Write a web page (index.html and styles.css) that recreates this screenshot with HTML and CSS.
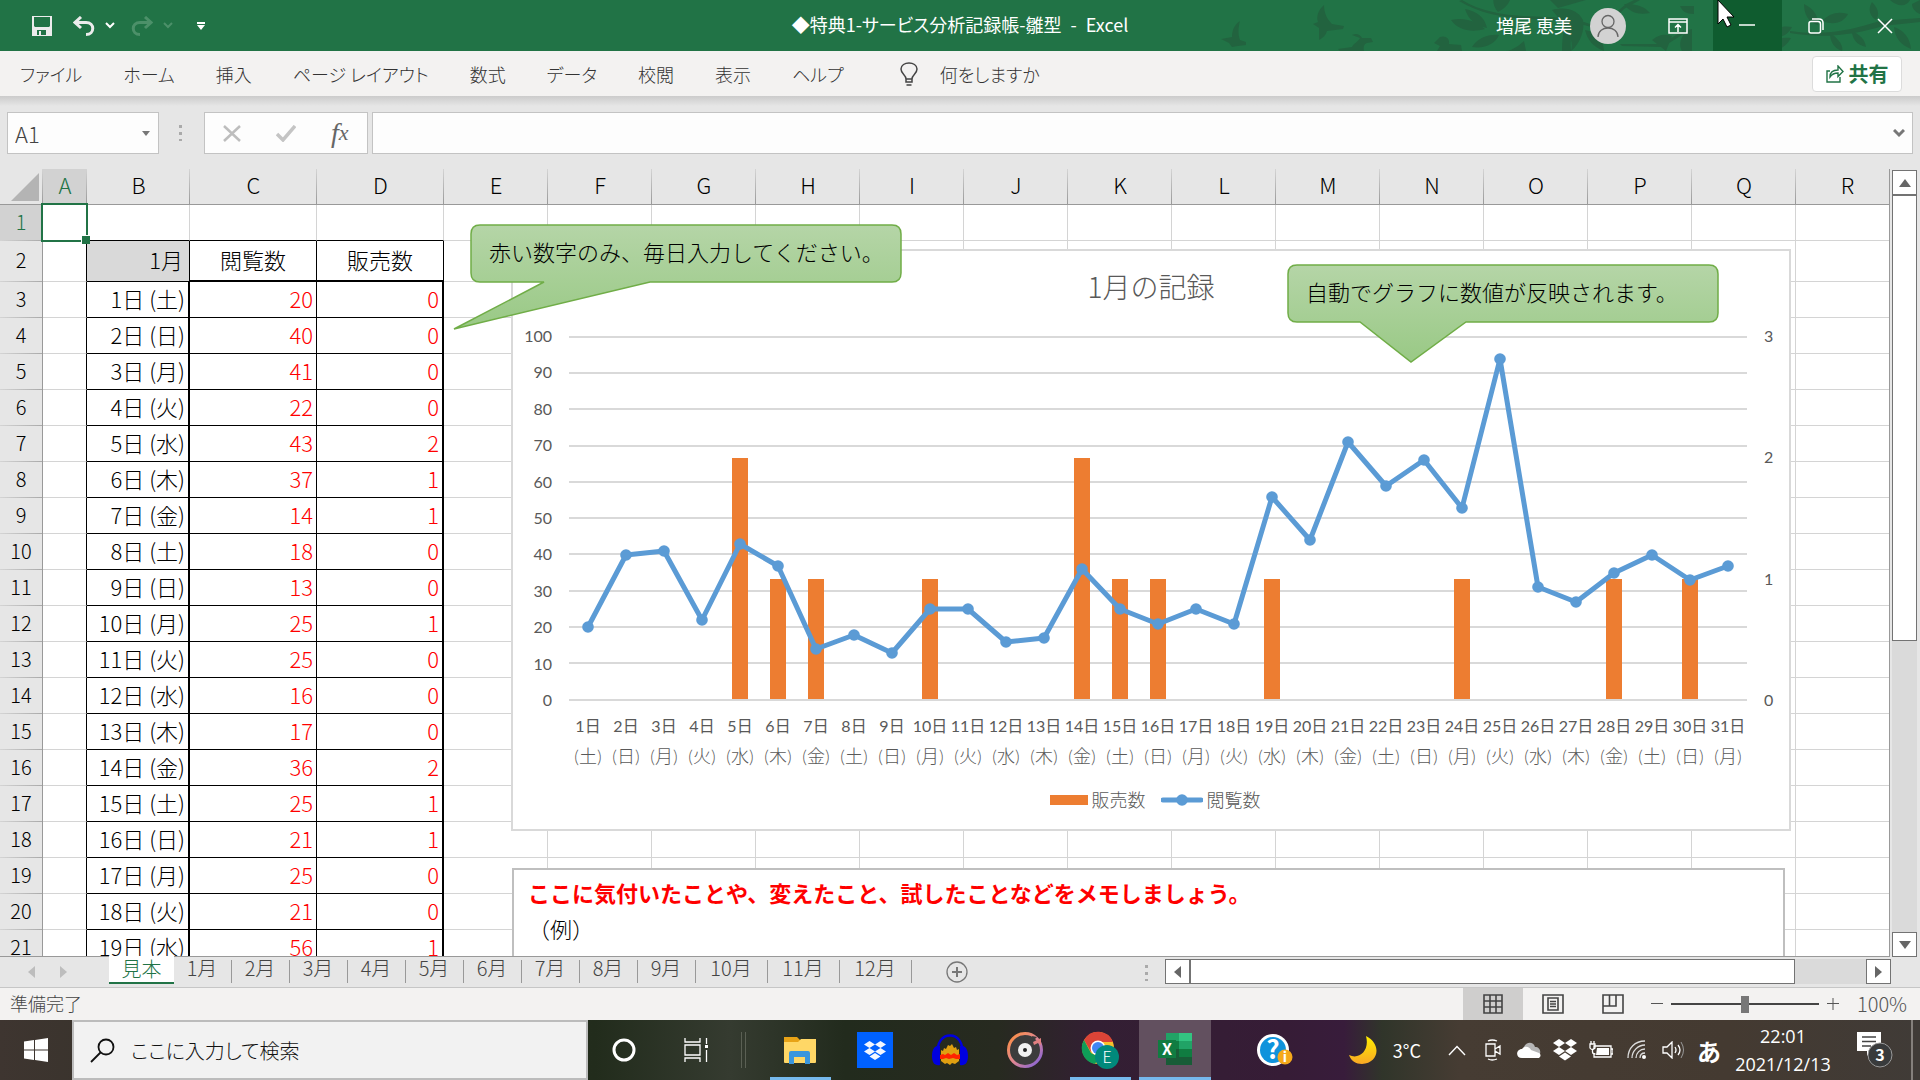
FILE: index.html
```html
<!DOCTYPE html>
<html lang="ja">
<head>
<meta charset="utf-8">
<title>◆特典1-サービス分析記録帳-雛型 - Excel</title>
<link rel="stylesheet" href="styles.css">
</head>
<body>
<header class="titlebar">
  <svg class="titlebar-art" width="720" height="51" viewBox="0 0 720 51" aria-hidden="true">
    <g fill="#22633f">
      <path d="M40 21c-6 4-8 10-8 16l-11 2 8 4 3 4 6-1 8-1v-3l-6-2c-2-5-2-12 0-19z"/>
      <path d="M124 5c-6 5-8 12-6 17l-5 2 6 4 0 12c4-2 7-5 8-9l16-2 1-3-12-2c-5-5-8-11-8-19z"/>
      <path d="M152 35l8 3c-1 3-6 5-8 9l-14 2 2 2h24c-1-4 0-7 3-8l6-1-2-4h-9c-2-4-6-5-10-3z"/>
      <path d="M240 37c5-2 10 1 9 7l12 1 1 6h-25l3-5-6-3z"/>
      <path d="M251 20c12-3 24 0 34 9-14 4-27 1-34-9zM265 9c12 2 20 9 22 19-11-2-19-9-22-19zM272 47c6-9 16-13 27-12-4 9-14 14-27 12zM298 12c-5-6-6-12-3-18h16c0 8-5 14-13 18zM318 46c-5 3-9 5-12 5h20l-2-10z"/>
      <path d="M262 0c30 18 64 16 110 18l24 8-1 2-26-7c-44-2-78-1-110-20zM350 0l8 8 28-8zM362 51c0-14 2-25 6-31l6 3c-3 8-4 17-3 28zM352 10c14-4 26 0 31 10 2 10-3 24-12 31 3-10-2-22-19-41zM400 26l26-22 8-4h6l-16 9-20 20zM424 4c14 0 21 3 26 9-11 2-20 0-26-9zM385 30c12 2 18 8 19 21-11-4-17-12-19-21zM420 44l42 0 22-14 1 3-22 14-41-1zM452 40c8-6 12-6 20-4l-6 15zM480 6h14v8c-8 0-12-3-14-8zM488 30c-7 6-10 14-6 21h10V29z"/>
      <path d="M591 38c-7 12-18 15-27 13 2-8 11-15 27-13zM570 36c3-7 11-11 22-9-4 8-11 12-22 9zM604 4c10 5 14 11 14 21-10-3-14-11-14-21zM622 21c8-8 16-10 26-7-4 8-13 12-26 7zM590 31c40 6 70-4 90-10l40-3v4l-37 4c-26 8-56 13-93 7zM630 33c8 5 14 13 12 18-8-3-12-9-12-18zM652 31c8 4 13 8 14 16-9-2-14-8-14-16zM672 2c6 6 8 12 4 18-7-5-8-11-4-18zM690 0h20c-3 6-11 8-20 0zM694 27c9 3 16 10 17 22-10-4-16-11-17-22zM712 4l8-4v14c-5-2-8-6-8-10z"/>
    </g>
  </svg>
  <div class="quick-access">
    <button class="icon-btn save" aria-label="上書き保存"><svg width="20" height="20" viewBox="0 0 20 20"><path d="M0 0h20v20H0z" fill="#ececec"/><path d="M2 1h16v9l-1 1H3l-1-1z" fill="#217346"/><path d="M5 14h9v5H9v-4H7v4H5z" fill="#217346"/></svg></button>
    <button class="icon-btn undo" aria-label="元に戻す"><svg width="22" height="20" viewBox="0 0 22 20"><path d="M8 1L2 6.500l6 5.500M2 6.500h11c9 0 9 12 0 12" fill="none" stroke="#ececec" stroke-width="3"/></svg></button>
    <button class="icon-btn" aria-label="元に戻す履歴"><svg width="10" height="7" viewBox="0 0 10 7"><path d="M1 1l4 4 4-4" fill="none" stroke="#fff" stroke-width="2"/></svg></button>
    <button class="icon-btn redo" aria-label="やり直し"><svg width="22" height="20" viewBox="0 0 22 20"><path d="M14 1l6 5.500-6 5.500M20 6.500H9c-9 0-9 12 0 12" fill="none" stroke="#4c9069" stroke-width="3"/></svg></button>
    <button class="icon-btn" aria-label="やり直し履歴"><svg width="10" height="7" viewBox="0 0 10 7"><path d="M1 1l4 4 4-4" fill="none" stroke="#4c9069" stroke-width="2"/></svg></button>
    <button class="icon-btn customize" aria-label="クイック アクセスのカスタマイズ"><svg width="8" height="8" viewBox="0 0 8 8"><path d="M0 0h8v2H0zM0 3h8L4 8z" fill="#fff"/></svg></button>
  </div>
  <h1 class="doc-title">◆特典1-サービス分析記録帳-雛型&ensp;-&ensp;Excel</h1>
  <div class="window-tools">
    <span class="user-name">増尾 恵美</span>
    <svg class="avatar" width="36" height="36" viewBox="0 0 36 36"><circle cx="18" cy="18" r="18" fill="#d2d2d2"/><g fill="none" stroke="#666" stroke-width="1.300"><circle cx="18" cy="13.500" r="6"/><path d="M8 29c0-12 20-12 20 0"/></g></svg>
    <button class="win-btn" aria-label="リボンの表示オプション"><svg width="20" height="16" viewBox="0 0 20 16"><path d="M1 1h18v14H1zM1 4h18M10 14V7M7 9.500l3-3 3 3" fill="none" stroke="#fff" stroke-width="1.500"/></svg></button>
    <button class="win-btn hovered" aria-label="最小化"><svg width="16" height="16" viewBox="0 0 16 16"><path d="M0 7h16" stroke="#fff" stroke-width="1.500"/></svg></button>
    <button class="win-btn" aria-label="元に戻す (縮小)"><svg width="16" height="16" viewBox="0 0 16 16"><path d="M3 3.500h7q2.500 0 2.500 2.500v7q0 2-2 2H3q-2 0-2-2V5.500q0-2 2-2zM4 1h7q4 0 4 4v7" fill="none" stroke="#fff" stroke-width="1.500"/></svg></button>
    <button class="win-btn" aria-label="閉じる"><svg width="16" height="16" viewBox="0 0 16 16"><path d="M1 1l14 14M15 1L1 15" stroke="#fff" stroke-width="1.500"/></svg></button>
  </div>
  <svg class="cursor" width="20" height="28" viewBox="0 0 20 28" aria-hidden="true"><path d="M1 0v24l5-5 4 8 4-2-4-8h7z" fill="#fff" stroke="#000" stroke-width="1"/></svg>
</header>

<nav class="ribbon">
  <button>ファイル</button><button>ホーム</button><button>挿入</button><button>ページ レイアウト</button><button>数式</button><button>データ</button><button>校閲</button><button>表示</button><button>ヘルプ</button>
  <button class="tell-me"><svg width="18" height="24" viewBox="0 0 18 24"><path d="M6 17c0-4-5-5-5-10 0-8 16-8 16 0 0 5-5 6-5 10zM6 17v3h6v-3M6.500 23h5" fill="none" stroke="#444" stroke-width="1.500"/></svg>何をしますか</button>
  <button class="share"><svg width="18" height="18" viewBox="0 0 18 18"><path d="M4 6H1v11h13v-5M4 12c0-5 3-7 8-7V1l5 5.500-5 5V8c-4 0-6 1-8 4z" fill="none" stroke="#217346" stroke-width="1.400"/></svg>共有</button>
</nav>

<section class="formula-bar">
  <div class="name-box"><input aria-label="名前ボックス" value="A1"><svg width="8" height="5" viewBox="0 0 8 5"><path d="M0 0h8L4 5z" fill="#777"/></svg></div>
  <div class="grip"></div>
  <div class="formula-tools">
    <button aria-label="キャンセル"><svg width="18" height="17" viewBox="0 0 18 17"><path d="M1 1l16 15M17 1L1 16" stroke="#bdbdbd" stroke-width="2.500"/></svg></button>
    <button aria-label="入力"><svg width="20" height="17" viewBox="0 0 20 17"><path d="M1 9l6 6L19 1" fill="none" stroke="#c4c4c4" stroke-width="3.500"/></svg></button>
    <button class="fx" aria-label="関数の挿入"><i>f</i><i class="x">x</i></button>
  </div>
  <div class="formula-input"><input aria-label="数式バー" value=""><svg width="12" height="9" viewBox="0 0 12 9"><path d="M1 1l5 5 5-5" fill="none" stroke="#777" stroke-width="3"/></svg></div>
</section>

<main class="workspace">
  <div class="sheet">
    <table class="grid">
      <colgroup><col class="c-head"><col class="c-a"><col class="c-b"><col class="c-cd"><col class="c-cd"><col class="c-std"><col class="c-std"><col class="c-std"><col class="c-std"><col class="c-std"><col class="c-std"><col class="c-std"><col class="c-std"><col class="c-std"><col class="c-std"><col class="c-std"><col class="c-std"><col class="c-std"><col></colgroup>
      <thead><tr><td class="corner"><svg width="28" height="28" viewBox="0 0 28 28"><path d="M28 0v28H0z" fill="#b4b4b4"/></svg></td><th class="selected">A</th><th>B</th><th>C</th><th>D</th><th>E</th><th>F</th><th>G</th><th>H</th><th>I</th><th>J</th><th>K</th><th>L</th><th>M</th><th>N</th><th>O</th><th>P</th><th>Q</th><th>R</th></tr></thead>
      <tbody>
        <tr class="first"><th class="selected">1</th><td class="active"><span class="cell-cursor"></span></td><td></td><td></td><td></td><td class="blank" colspan="14"></td></tr>
        <tr class="labels"><th>2</th><td></td><td class="month">1月</td><td>閲覧数</td><td>販売数</td><td class="blank" colspan="14"></td></tr>
        <tr><th>3</th><td></td><td>1日 (土)</td><td>20</td><td>0</td><td class="blank" colspan="14"></td></tr>
        <tr><th>4</th><td></td><td>2日 (日)</td><td>40</td><td>0</td><td class="blank" colspan="14"></td></tr>
        <tr><th>5</th><td></td><td>3日 (月)</td><td>41</td><td>0</td><td class="blank" colspan="14"></td></tr>
        <tr><th>6</th><td></td><td>4日 (火)</td><td>22</td><td>0</td><td class="blank" colspan="14"></td></tr>
        <tr><th>7</th><td></td><td>5日 (水)</td><td>43</td><td>2</td><td class="blank" colspan="14"></td></tr>
        <tr><th>8</th><td></td><td>6日 (木)</td><td>37</td><td>1</td><td class="blank" colspan="14"></td></tr>
        <tr><th>9</th><td></td><td>7日 (金)</td><td>14</td><td>1</td><td class="blank" colspan="14"></td></tr>
        <tr><th>10</th><td></td><td>8日 (土)</td><td>18</td><td>0</td><td class="blank" colspan="14"></td></tr>
        <tr><th>11</th><td></td><td>9日 (日)</td><td>13</td><td>0</td><td class="blank" colspan="14"></td></tr>
        <tr><th>12</th><td></td><td>10日 (月)</td><td>25</td><td>1</td><td class="blank" colspan="14"></td></tr>
        <tr><th>13</th><td></td><td>11日 (火)</td><td>25</td><td>0</td><td class="blank" colspan="14"></td></tr>
        <tr><th>14</th><td></td><td>12日 (水)</td><td>16</td><td>0</td><td class="blank" colspan="14"></td></tr>
        <tr><th>15</th><td></td><td>13日 (木)</td><td>17</td><td>0</td><td class="blank" colspan="14"></td></tr>
        <tr><th>16</th><td></td><td>14日 (金)</td><td>36</td><td>2</td><td class="blank" colspan="14"></td></tr>
        <tr><th>17</th><td></td><td>15日 (土)</td><td>25</td><td>1</td><td class="blank" colspan="14"></td></tr>
        <tr><th>18</th><td></td><td>16日 (日)</td><td>21</td><td>1</td><td class="blank" colspan="14"></td></tr>
        <tr><th>19</th><td></td><td>17日 (月)</td><td>25</td><td>0</td><td class="blank" colspan="14"></td></tr>
        <tr><th>20</th><td></td><td>18日 (火)</td><td>21</td><td>0</td><td class="blank" colspan="14"></td></tr>
        <tr><th>21</th><td></td><td>19日 (水)</td><td>56</td><td>1</td><td class="blank" colspan="14"></td></tr>
      </tbody>
    </table>

    <figure class="chart">
      <figcaption>1月の記録</figcaption>
      <div class="plot-row">
        <div class="axis left"><span>100</span><span>90</span><span>80</span><span>70</span><span>60</span><span>50</span><span>40</span><span>30</span><span>20</span><span>10</span><span>0</span></div>
        <svg class="plot" width="1178" height="366" viewBox="0 -1 1178 366">
          <defs><marker id="dot" markerUnits="userSpaceOnUse" markerWidth="12" markerHeight="12" refX="6" refY="6"><circle cx="6" cy="6" r="5.800" fill="#5b9bd5"/></marker></defs>
          <path d="M0 0h1178M0 36h1178M0 72h1178M0 109h1178M0 145h1178M0 181h1178M0 217h1178M0 254h1178M0 290h1178M0 326h1178M0 363h1178" stroke="#d9d9d9" stroke-width="2"/>
          <path d="M163 121h16v241h-16zM201 242h16v120h-16zM239 242h16v120h-16zM353 242h16v120h-16zM505 121h16v241h-16zM543 242h16v120h-16zM581 242h16v120h-16zM695 242h16v120h-16zM885 242h16v120h-16zM1037 242h16v120h-16zM1113 242h16v120h-16z" fill="#ed7d31"/>
          <polyline points="19,290 57,218 95,214 133,283 171,207 209,229 247,312 285,298 323,316 361,272 399,272 437,305 475,301 513,232 551,272 589,287 627,272 665,287 703,160 741,203 779,105 817,149 855,123 893,171 931,22 969,250 1007,265 1045,236 1083,218 1121,243 1159,229" fill="none" stroke="#5b9bd5" stroke-width="5" stroke-linejoin="round" marker-start="url(#dot)" marker-mid="url(#dot)" marker-end="url(#dot)"/>
        </svg>
        <div class="axis right"><span>3</span><span>2</span><span>1</span><span>0</span></div>
      </div>
      <div class="days">
        <span>1日<b>(土)</b></span><span>2日<b>(日)</b></span><span>3日<b>(月)</b></span><span>4日<b>(火)</b></span><span>5日<b>(水)</b></span><span>6日<b>(木)</b></span><span>7日<b>(金)</b></span><span>8日<b>(土)</b></span><span>9日<b>(日)</b></span><span>10日<b>(月)</b></span><span>11日<b>(火)</b></span><span>12日<b>(水)</b></span><span>13日<b>(木)</b></span><span>14日<b>(金)</b></span><span>15日<b>(土)</b></span><span>16日<b>(日)</b></span><span>17日<b>(月)</b></span><span>18日<b>(火)</b></span><span>19日<b>(水)</b></span><span>20日<b>(木)</b></span><span>21日<b>(金)</b></span><span>22日<b>(土)</b></span><span>23日<b>(日)</b></span><span>24日<b>(月)</b></span><span>25日<b>(火)</b></span><span>26日<b>(水)</b></span><span>27日<b>(木)</b></span><span>28日<b>(金)</b></span><span>29日<b>(土)</b></span><span>30日<b>(日)</b></span><span>31日<b>(月)</b></span>
      </div>
      <div class="legend">
        <svg width="38" height="12" viewBox="0 0 38 12"><path d="M0 1h38v10H0z" fill="#ed7d31"/></svg><span>販売数</span>
        <svg class="line-key" width="42" height="12" viewBox="0 0 42 12"><path d="M2 6h38" stroke="#5b9bd5" stroke-width="5" stroke-linecap="round"/><circle cx="21" cy="6" r="5.800" fill="#5b9bd5"/></svg><span>閲覧数</span>
      </div>
    </figure>

    <svg class="callout input-hint" width="452" height="108" viewBox="0 0 452 108">
      <defs><linearGradient id="leaf" x1="0" y1="0" x2="0" y2="1"><stop offset="0" stop-color="#b5d5a7"/><stop offset="1" stop-color="#99c985"/></linearGradient></defs>
      <path d="M28 2h412q9 0 9 9v39q0 9-9 9H198L2 106 92 59H28q-9 0-9-9V11q0-9 9-9z" fill="url(#leaf)" stroke="#70ad47" stroke-width="1.500"/>
      <text x="37" y="38">赤い数字のみ、毎日入力してください。</text>
    </svg>
    <svg class="callout graph-hint" width="434" height="101" viewBox="0 0 434 101">
      <path d="M11 2h412q9 0 9 9v39q0 9-9 9H180L125 99 74 59H11q-9 0-9-9V11q0-9 9-9z" fill="url(#leaf)" stroke="#70ad47" stroke-width="1.500"/>
      <text x="20" y="38">自動でグラフに数値が反映されます。</text>
    </svg>
    <div class="memo"><p class="memo-title">ここに気付いたことや、変えたこと、試したことなどをメモしましょう。</p><p>（例）</p></div>
  </div>
  <div class="scroll vertical">
    <button aria-label="上へ"><svg width="12" height="8" viewBox="0 0 12 8"><path d="M0 8h12L6 0z" fill="#666"/></svg></button>
    <div class="track"><div class="thumb"></div></div>
    <button aria-label="下へ"><svg width="12" height="8" viewBox="0 0 12 8"><path d="M0 0h12L6 8z" fill="#666"/></svg></button>
  </div>
</main>

<div class="sheet-tabs">
  <div class="tab-nav">
    <button aria-label="前のシート"><svg width="7" height="12" viewBox="0 0 7 12"><path d="M7 0v12L0 6z" fill="#bdbdbd"/></svg></button>
    <button aria-label="次のシート"><svg width="7" height="12" viewBox="0 0 7 12"><path d="M0 0v12l7-6z" fill="#bdbdbd"/></svg></button>
  </div>
  <button class="tab current">見本</button><button class="tab">1月</button><button class="tab">2月</button><button class="tab">3月</button><button class="tab">4月</button><button class="tab">5月</button><button class="tab">6月</button><button class="tab">7月</button><button class="tab">8月</button><button class="tab">9月</button><button class="tab wide">10月</button><button class="tab wide">11月</button><button class="tab wide">12月</button>
  <button class="add-tab" aria-label="新しいシート"><svg width="22" height="22" viewBox="0 0 22 22"><g fill="none" stroke="#777"><circle cx="11" cy="11" r="10" stroke-width="1.300"/><path d="M6 11h10M11 6v10" stroke-width="2"/></g></svg></button>
  <div class="grip"></div>
  <div class="scroll horizontal">
    <button aria-label="左へ"><svg width="7" height="12" viewBox="0 0 7 12"><path d="M7 0v12L0 6z" fill="#666"/></svg></button>
    <div class="track"><div class="thumb"></div></div>
    <button aria-label="右へ"><svg width="7" height="12" viewBox="0 0 7 12"><path d="M0 0v12l7-6z" fill="#666"/></svg></button>
  </div>
</div>

<footer class="status">
  <span class="ready">準備完了</span>
  <button class="view on" aria-label="標準"><svg width="20" height="20" viewBox="0 0 20 20"><path d="M1 1h18v18H1zM7 1v18M13 1v18M1 7h18M1 13h18" fill="none" stroke="#444" stroke-width="1.600"/></svg></button>
  <button class="view" aria-label="ページ レイアウト"><svg width="22" height="20" viewBox="0 0 22 20"><path d="M1 1h20v18H1zM6 4h10v12H6zM8 7.500h6M8 10h6M8 12.500h6" fill="none" stroke="#444" stroke-width="1.600"/></svg></button>
  <button class="view" aria-label="改ページ プレビュー"><svg width="22" height="20" viewBox="0 0 22 20"><path d="M1 1h20v18H1zM1 12h13V1M7.500 1v11" fill="none" stroke="#444" stroke-width="1.600"/></svg></button>
  <button class="zoom-step" aria-label="縮小"><svg width="12" height="12" viewBox="0 0 12 12"><path d="M0 5.500h12" stroke="#555"/></svg></button>
  <input class="zoom" type="range" min="0" max="100" value="50" aria-label="ズーム">
  <button class="zoom-step" aria-label="拡大"><svg width="12" height="12" viewBox="0 0 12 12"><path d="M0 5.500h12M6 0v12" stroke="#555"/></svg></button>
  <span class="zoom-value">100%</span>
</footer>

<div class="taskbar">
  <button class="app" aria-label="スタート"><svg width="24" height="24" viewBox="0 0 24 24"><path d="M0 3.500L10 2v9.500H0zM11 1.900L24 0v11.500H11zM0 12.500h10V22L0 20.500zM11 12.500h13V24l-13-1.900z" fill="#fff"/></svg></button>
  <label class="search"><svg width="25" height="25" viewBox="0 0 25 25"><g fill="none" stroke="#111" stroke-width="1.800"><circle cx="16" cy="9" r="7.500"/><path d="M10.500 14.500L1 24"/></g></svg><input type="text" placeholder="ここに入力して検索"></label>
  <button class="app" aria-label="Cortana"><svg width="24" height="24" viewBox="0 0 24 24"><circle cx="12" cy="12" r="10" fill="none" stroke="#fff" stroke-width="3"/></svg></button>
  <button class="app" aria-label="タスク ビュー"><svg width="26" height="24" viewBox="0 0 26 24"><path d="M2 0v4h15V0M2 24v-4h15v4M2 7h15v10H2zM23.500 0v6M23.500 12v12" fill="none" stroke="#fff" stroke-width="1.300"/><path d="M22 7h3v3h-3z" fill="#fff"/></svg></button>
  <div class="divider"></div>
  <div class="apps">
    <button class="app running" aria-label="エクスプローラー"><svg width="32" height="28" viewBox="0 0 32 28"><path d="M0 1h13l3 3v8H0z" fill="#e8a317"/><path d="M0 6h14l3-3h15v23q0 1-1 1H1q-1 0-1-1z" fill="#ffd766"/><path d="M5 28V17q0-2 2-2h17q2 0 2 2v11h-5v-7H10v7z" fill="#3a96dd"/></svg></button>
    <button class="app" aria-label="Dropbox"><svg width="36" height="36" viewBox="0 0 36 36"><path d="M0 0h36v36H0z" fill="#0061ff"/><path d="M12.500 9l5.500 3.500-5.500 3.500L7 12.500zM23.500 9l5.500 3.500-5.500 3.500-5.500-3.500zM12.500 16l5.500 3.500-5.500 3.500L7 19.500zM23.500 16l5.500 3.500-5.500 3.500-5.500-3.500zM18 21l5.500 3.500L18 28l-5.500-3.500z" fill="#f4f7ff"/></svg></button>
    <button class="app" aria-label="Audacity"><svg width="36" height="32" viewBox="0 0 36 32"><path d="M9 16l2 1 1-3 2 1 2-4 2 1 2-2 2 4 2-1 1 3 2-1v12l-4 3-3-1-2 2-3-2-2 1-4-3z" fill="#e0a010"/><path d="M8 21l3-1 2 1 3-2 3 2 3-2 3 2 3-1v5l-4 0-3-1-4 1-3-1-3 1-3-0z" fill="#ff2200"/><path d="M6 21C2-5 34-5 30 21" fill="none" stroke="#0000e0" stroke-width="2.500"/><path d="M8 12C3 11 0 15 0 22s3 10 8 9zM28 12c5-1 8 3 8 10s-3 10-8 9z" fill="#0000e0"/></svg></button>
    <button class="app" aria-label="Groove"><svg width="36" height="36" viewBox="0 0 36 36"><defs><linearGradient id="ring" x1="0" y1="0" x2="1" y2="1"><stop offset="0" stop-color="#ff8f3c"/><stop offset=".5" stop-color="#e08792"/><stop offset="1" stop-color="#7b5fe0"/></linearGradient></defs><circle cx="18" cy="18" r="16.500" fill="#3c3c3c" stroke="url(#ring)" stroke-width="3"/><circle cx="18" cy="18" r="7" fill="#f0f0f0"/><circle cx="18" cy="18" r="2" fill="#222"/><path d="M26 10l8-4v7l-3-2-4 2z" fill="#e08080"/><path d="M25 4l5 1-4 4z" fill="#3c3c3c"/></svg></button>
    <button class="app running" aria-label="Chrome"><svg width="38" height="38" viewBox="0 0 38 38"><circle cx="17" cy="17" r="16" fill="#f8c02c"/><path d="M3 9a16 16 0 0 1 29 2H17l-7 10z" fill="#db4437"/><path d="M3 9l7 13 8 4-4 7A16 16 0 0 1 3 9z" fill="#0f9d58"/><circle cx="17" cy="17" r="7.500" fill="#fff"/><circle cx="17" cy="17" r="6" fill="#4285f4"/><circle cx="26" cy="26" r="12" fill="#00897b"/><text x="26" y="32" text-anchor="middle" font-size="16" fill="#fff">E</text></svg></button>
    <button class="app running focused" aria-label="Excel"><svg width="36" height="34" viewBox="0 0 36 34"><path d="M9 0h13v8H9z" fill="#21a366"/><path d="M22 0h13v8H22z" fill="#33c481"/><path d="M9 8h13v8H9z" fill="#107c41"/><path d="M22 8h13v8H22z" fill="#21a366"/><path d="M9 16h26v16H9z" fill="#185c37"/><path d="M22 16h13v8H22z" fill="#107c41"/><path d="M1 7h18v18H1z" fill="#107c41"/><text x="10" y="22" text-anchor="middle" font-size="16" font-weight="700" fill="#fff">X</text></svg></button>
  </div>
  <button class="app help" aria-label="ヘルプ"><svg width="36" height="34" viewBox="0 0 36 34"><circle cx="16" cy="17" r="16" fill="#fff"/><circle cx="16" cy="17" r="13" fill="#0f93dc"/><text x="16" y="26" text-anchor="middle" font-size="26" font-weight="700" fill="#fff">?</text><circle cx="28" cy="24" r="7.500" fill="#f5a91b"/><text x="28" y="29" text-anchor="middle" font-size="14" font-weight="700" fill="#fff">i</text></svg></button>
  <div class="tray">
    <button class="weather"><svg width="28" height="28" viewBox="0 0 28 28"><defs><linearGradient id="moon" x1="0" y1="0" x2="0" y2="1"><stop offset="0" stop-color="#ffee00"/><stop offset="1" stop-color="#f9a825"/></linearGradient></defs><path d="M17 0c16 8 13 27-4 28C7 28 2 25 0 19c10 5 21-4 17-19z" fill="url(#moon)"/></svg>3°C</button>
    <button class="tray-icon" aria-label="隠れているインジケーター"><svg width="18" height="11" viewBox="0 0 18 11"><path d="M1 10l8-8.500 8 8.500" fill="none" stroke="#fff" stroke-width="1.400"/></svg></button>
    <button class="tray-icon" aria-label="会議"><svg width="18" height="22" viewBox="0 0 18 22"><path d="M2 5h9v12H2zM11 10l5-3v8l-5-3M4 2q4-2 9 0M4 20q4 2 9 0" fill="none" stroke="#fff" stroke-width="1.300"/></svg></button>
    <button class="tray-icon" aria-label="OneDrive"><svg width="24" height="16" viewBox="0 0 24 16"><path d="M6 9C6 0 16-2 18 5c4 0 6 3 5 7L8 14z" fill="#b5b5b5"/><path d="M5 16c-7 0-6-9 0-9 3-4 8-2 9 1l8 3c3 2 1 5-1 5z" fill="#fff"/></svg></button>
    <button class="tray-icon" aria-label="Dropbox"><svg width="24" height="22" viewBox="0 0 24 22"><path d="M6 0l6 4-6 4-6-4zM18 0l6 4-6 4-6-4zM6 8l6 4-6 4-6-4zM18 8l6 4-6 4-6-4zM12 13.500l6 4-6 4-6-4z" fill="#fff"/></svg></button>
    <button class="tray-icon" aria-label="バッテリー"><svg width="24" height="18" viewBox="0 0 24 18"><path d="M5 8V5h17v11H5v-4M22 8h2v5h-2" fill="none" stroke="#fff" stroke-width="1.300"/><path d="M8 7h12v7H7z" fill="#fff"/><path d="M1 3v4q2 3 5 0V3zM2 0v3M5 0v3M3.500 8v3q0 2 3 2" fill="none" stroke="#fff" stroke-width="1.300"/></svg></button>
    <button class="tray-icon" aria-label="ネットワーク"><svg width="20" height="20" viewBox="0 0 20 20"><g fill="none" stroke="#ddd" stroke-width="1.300"><path d="M1 18C1 8 8 1 18 1M5 18C5 11 11 5 18 5M9 18c0-5 4-9 9-9M13 18c0-3 2-5 5-5"/></g><circle cx="17" cy="17" r="2" fill="#fff"/></svg></button>
    <button class="tray-icon" aria-label="音量"><svg width="22" height="18" viewBox="0 0 22 18"><path d="M1 6h4l5-5v16l-5-5H1zM13 6q2 3 0 6M16 4q4 5 0 10" fill="none" stroke="#fff" stroke-width="1.300"/><path d="M19 1q5 8 0 16" fill="none" stroke="#999"/></svg></button>
    <button class="tray-icon ime">あ</button>
    <button class="clock"><span>22:01</span><span>2021/12/13</span></button>
    <button class="notice" aria-label="通知 3件"><svg width="36" height="36" viewBox="0 0 36 36"><path d="M0 0h24v19H14l-4 5v-5H0z" fill="#fff"/><path d="M5 5h14M5 9.500h14M5 14h9" stroke="#444" stroke-width="1.400"/><circle cx="23" cy="23" r="12" fill="#393b3c" stroke="#999"/><text x="23" y="29" text-anchor="middle" font-size="16" font-weight="700" fill="#fff">3</text></svg></button>
    <button class="show-desktop" aria-label="デスクトップの表示"></button>
  </div>
</div>
</body>
</html>
```
FILE: styles.css
```css
* { box-sizing: border-box; }

body {
  margin: 0;
  height: 100vh;
  display: flex;
  flex-direction: column;
  overflow: hidden;
  background: #e6e6e6;
  color: #000;
  font-family: "Noto Sans CJK JP", "Noto Sans", sans-serif;
  font-size: 20px;
  font-weight: 300;
  font-feature-settings: "palt";
}

button, input {
  margin: 0;
  padding: 0;
  border: 0;
  background: none;
  color: inherit;
  font: inherit;
  font-feature-settings: inherit;
  white-space: nowrap;
}

button { display: flex; align-items: center; justify-content: center; }
svg { display: block; flex: none; }
p, figure { margin: 0; }

/* Title bar */
.titlebar {
  position: relative;
  flex: none;
  display: grid;
  grid-template-columns: 1fr auto 1fr;
  align-items: center;
  height: 51px;
  background: #217346;
  color: #fff;
  font-size: 18px;
}
.titlebar-art { position: absolute; top: 0; right: 0; }
.quick-access { display: flex; align-items: center; gap: 10px; padding-left: 32px; }
.save { margin-right: 11px; }
.redo { margin-left: 6px; }
.customize { margin-left: 14px; }
.doc-title { margin: 0; padding-bottom: 4px; font-size: 18px; font-weight: 400; }
.window-tools { position: relative; display: flex; align-items: center; justify-content: flex-end; }
.user-name { margin-right: 18px; padding-bottom: 2px; font-weight: 400; }
.avatar { margin-right: 18px; }
.win-btn { width: 69px; height: 51px; padding-right: 2px; }
.win-btn.hovered { background: #0f5c2f; }
.cursor { position: absolute; top: 0; right: 183px; }

/* Ribbon tabs */
.ribbon {
  flex: none;
  display: flex;
  align-items: center;
  gap: 41px;
  height: 45px;
  padding: 0 18px 0 20px;
  background: #f3f2f1;
  color: #333;
  font-size: 18px;
}
.tell-me { gap: 22px; margin-left: 15px; }
.share {
  gap: 5px;
  width: 90px;
  height: 36px;
  margin-left: auto;
  border: 1px solid #dcdcdc;
  border-radius: 4px;
  background: #fff;
  color: #217346;
  font-size: 20px;
  font-weight: 700;
}

/* Formula bar */
.formula-bar {
  flex: none;
  display: flex;
  height: 73px;
  padding: 16px 7px 15px;
  background: linear-gradient(#cbcbcb, #e6e6e6 10px);
}
.name-box, .formula-tools, .formula-input {
  display: flex;
  align-items: center;
  border: 1px solid #c3c3c3;
  background: #fdfdfd;
}
.name-box { width: 152px; padding: 0 8px 0 7px; color: #444; font-size: 22px; }
.name-box input, .formula-input input { flex: 1; width: 0; height: 38px; outline: 0; }
.grip {
  width: 3px;
  height: 16px;
  background: repeating-linear-gradient(#aaa 0 3px, transparent 3px 7px);
}
.formula-bar .grip { margin: 13px 22px 0 20px; }
.formula-tools { width: 164px; padding-left: 18px; gap: 35px; }
.fx { color: #666; font-family: "Liberation Serif", serif; font-size: 28px; line-height: 28px; }
.fx .x { font-size: 22px; }
.formula-input { flex: 1; margin-left: 4px; padding-right: 7px; }

/* Worksheet */
.workspace { flex: 1; min-height: 0; display: flex; }
.sheet {
  position: relative;
  flex: 1;
  overflow: hidden;
  border-right: 1px solid #999;
  border-bottom: 1px solid #999;
  background: #fff;
}
.grid {
  width: 100%;
  table-layout: fixed;
  border-collapse: separate;
  border-spacing: 0;
  font-size: 22px;
  line-height: 30px;
}
.c-head { width: 43px; }
.c-a { width: 44px; }
.c-b { width: 103px; }
.c-cd { width: 127px; }
.c-std { width: 104px; }
.grid th, .grid td { height: 36px; padding: 0 0 4px; font-weight: 300; white-space: nowrap; }
.grid thead th {
  padding-bottom: 5px;
  border-bottom: 1px solid #999;
  background: linear-gradient(#d4d4d4, #999) right / 1px 100% no-repeat #e6e6e6;
}
.grid thead th:last-child { padding-left: 10px; background: #e6e6e6; }
.grid tbody th {
  padding-bottom: 3px;
  border-right: 1px solid #999;
  background: linear-gradient(90deg, #d4d4d4, #aaa) bottom / 100% 1px no-repeat #e6e6e6;
  font-size: 20px;
}
.grid thead .selected, .grid tbody .selected { background-color: #d2d2d2; color: #217346; }
.grid .corner { padding: 0 4px 0 11px; border-bottom: 1px solid #999; background: linear-gradient(#d4d4d4, #999) right / 1px 100% no-repeat #e6e6e6; }
.grid tbody td { border-right: 1px solid #d4d4d4; border-bottom: 1px solid #d4d4d4; }
.grid tbody td:nth-child(2) { border-right-color: #000; }
.grid tbody td:nth-child(n+3) { border-right: 1px solid #000; border-bottom-color: #000; text-align: right; }
.grid tbody td:nth-child(3) { border-right-width: 2px; padding-right: 3px; }
.grid tbody td:nth-child(4), .grid tbody td:nth-child(5) { padding-right: 3px; color: #f00; }
.grid tbody td:nth-child(5) { border-right-width: 2px; }
.grid tbody .first td { border-right: 1px solid #d4d4d4; }
.grid tbody .labels td { height: 41px; border-right-width: 1px; color: #000; }
.grid tbody .labels td:nth-child(4), .grid tbody .labels td:nth-child(5) { border-bottom-width: 2px; padding: 0 0 4px; text-align: center; }
.grid tbody .labels .month { padding-right: 6px; background: #d9d9d9; }
.grid tbody td.blank {
  border-right: 0;
  border-bottom-color: #d4d4d4;
  background: repeating-linear-gradient(90deg, transparent 0 103px, #d4d4d4 103px 104px);
}
.grid .active { position: relative; }
.cell-cursor { position: absolute; inset: -2px; border: 2px solid #217346; }
.cell-cursor::after {
  content: "";
  position: absolute;
  right: -4px;
  bottom: -4px;
  width: 8px;
  height: 8px;
  border: solid #fff;
  border-width: 1px 0 0 1px;
  background: #217346;
}

/* Chart, laid over the cells */
.chart {
  position: absolute;
  left: 511px;
  top: 80px;
  width: 1280px;
  height: 582px;
  border: 2px solid #d9d9d9;
  background: #fff;
  color: #595959;
  font-family: Lato, "Noto Sans CJK JP", sans-serif;
  font-size: 16px;
}
.chart figcaption { padding-top: 16px; height: 85px; font-size: 28px; line-height: 38px; text-align: center; font-family: "Noto Sans CJK JP", sans-serif; font-feature-settings: normal; }
.plot-row { display: flex; font-weight: 400; }
.axis { display: flex; flex-direction: column; justify-content: space-between; margin: -10px 0 -8px; line-height: 20px; }
.axis.left { width: 56px; padding-right: 17px; text-align: right; }
.axis.right { padding-left: 17px; }
.days { display: grid; grid-template-columns: repeat(31, 38px); margin: 9px 0 0 56px; font-weight: 400; line-height: 30px; text-align: center; white-space: nowrap; }
.days b { display: block; font-size: 18px; font-weight: 300; }
.legend { display: flex; align-items: center; justify-content: center; gap: 4px; margin-top: 14px; padding-left: 8px; font-size: 18px; line-height: 30px; }
.legend .line-key { margin-left: 11px; }

/* Drawn callouts and memo box */
.callout { position: absolute; font-size: 22px; font-feature-settings: normal; }
.input-hint { left: 452px; top: 54px; }
.graph-hint { left: 1286px; top: 94px; }
.memo {
  position: absolute;
  left: 512px;
  top: 699px;
  width: 1273px;
  height: 200px;
  padding: 4px 14px;
  border: 2px solid #bfbfbf;
  background: #fff;
  font-size: 22px;
  line-height: 36px;
  font-feature-settings: normal;
}
.memo-title { color: #f00; font-weight: 700; }

/* Scroll bars */
.scroll { display: flex; }
.scroll button { flex: none; width: 25px; height: 25px; border: 1px solid #737373; background: #fff; }
.track { flex: 1; background: #dadada; }
.thumb { border: 1px solid #737373; background: #fff; }
.vertical { flex-direction: column; margin: 1px 3px 0 2px; }
.vertical .thumb { height: 60.5%; }
.horizontal { width: 726px; height: 25px; margin: 2px 29px 0 17px; }
.horizontal .thumb { width: 89.5%; height: 100%; }

/* Sheet tabs */
.sheet-tabs { flex: none; display: flex; height: 30px; background: #e6e6e6; color: #444; }
.tab-nav { display: flex; gap: 25px; width: 109px; padding-left: 28px; }
.tab { position: relative; width: 58px; height: 27px; padding: 0 2px 6px 0; }
.tab.wide { width: 72px; }
.tab:not(.current)::after { content: ""; position: absolute; right: 0; top: 3px; width: 1px; height: 23px; background: #999; }
.tab.current { width: 65px; height: 28px; margin-top: -1px; padding: 0 0 2px; border-bottom: 2px solid #217346; background: #fff; color: #217346; }
.add-tab { width: 22px; height: 30px; margin-left: 34px; }
.sheet-tabs .grip { margin: 8px 0 0 auto; }

/* Status bar */
.status {
  flex: none;
  display: flex;
  align-items: center;
  height: 33px;
  padding: 0 11px 0 10px;
  border-top: 1px solid #c6c6c6;
  background: #f3f2f1;
  color: #444;
  font-size: 18px;
}
.ready { margin-right: auto; padding-bottom: 2px; }
.view { width: 60px; height: 32px; }
.view.on { background: #cfcecd; }
.zoom-step { width: 12px; height: 12px; }
.view + .zoom-step { margin-left: 8px; }
.zoom { width: 148px; height: 18px; margin: 0 8px; appearance: none; background: linear-gradient(#444, #444) center / 100% 2px no-repeat; }
.zoom::-webkit-slider-thumb { appearance: none; width: 8px; height: 17px; background: #777; }
.zoom-value { width: 52px; margin-left: 18px; padding-bottom: 2px; font-size: 20px; color: #555; }

/* Windows taskbar */
.taskbar {
  flex: none;
  display: flex;
  height: 60px;
  background: linear-gradient(90deg, #3e3530 0, #222c1c 31%, #353b30 38%, #222b1d 44%, #272a20 52%, #331f33 57%, #361c36 67%, #381c3b 70%, #30352a 72%, #463c33 76%, #443a31 90%, #403b37 100%);
  color: #fff;
}
.app { position: relative; width: 72px; height: 60px; }
.search { display: flex; align-items: center; gap: 16px; width: 516px; padding: 0 16px; border: 2px solid #bcbcbc; background: #f2f2f2; }
.search input { flex: 1; height: 50px; outline: 0; font-size: 20px; }
.search input::placeholder { color: #111; opacity: 1; }
.divider { width: 5px; height: 36px; margin: 12px 18px 0 9px; border: solid #5b6054; border-width: 0 1px; }
.apps { display: flex; gap: 3px; }
.app.running::after { content: ""; position: absolute; left: 6px; right: 5px; bottom: 0; height: 3px; background: #76b9ed; }
.app.focused { background: #62505f; }
.app.focused::after { left: 0; right: 0; }
.help { margin-left: 28px; }
.tray { display: flex; margin-left: auto; font-size: 18px; font-weight: 400; }
.weather { gap: 16px; padding-right: 18px; }
.tray-icon { width: 36px; }
.ime { font-size: 24px; font-weight: 700; }
.clock { flex-direction: column; width: 112px; font-family: "Open Sans", sans-serif; line-height: 28px; }
.notice { width: 72px; }
.show-desktop { width: 9px; border-left: 2px solid #85807c; }
```
